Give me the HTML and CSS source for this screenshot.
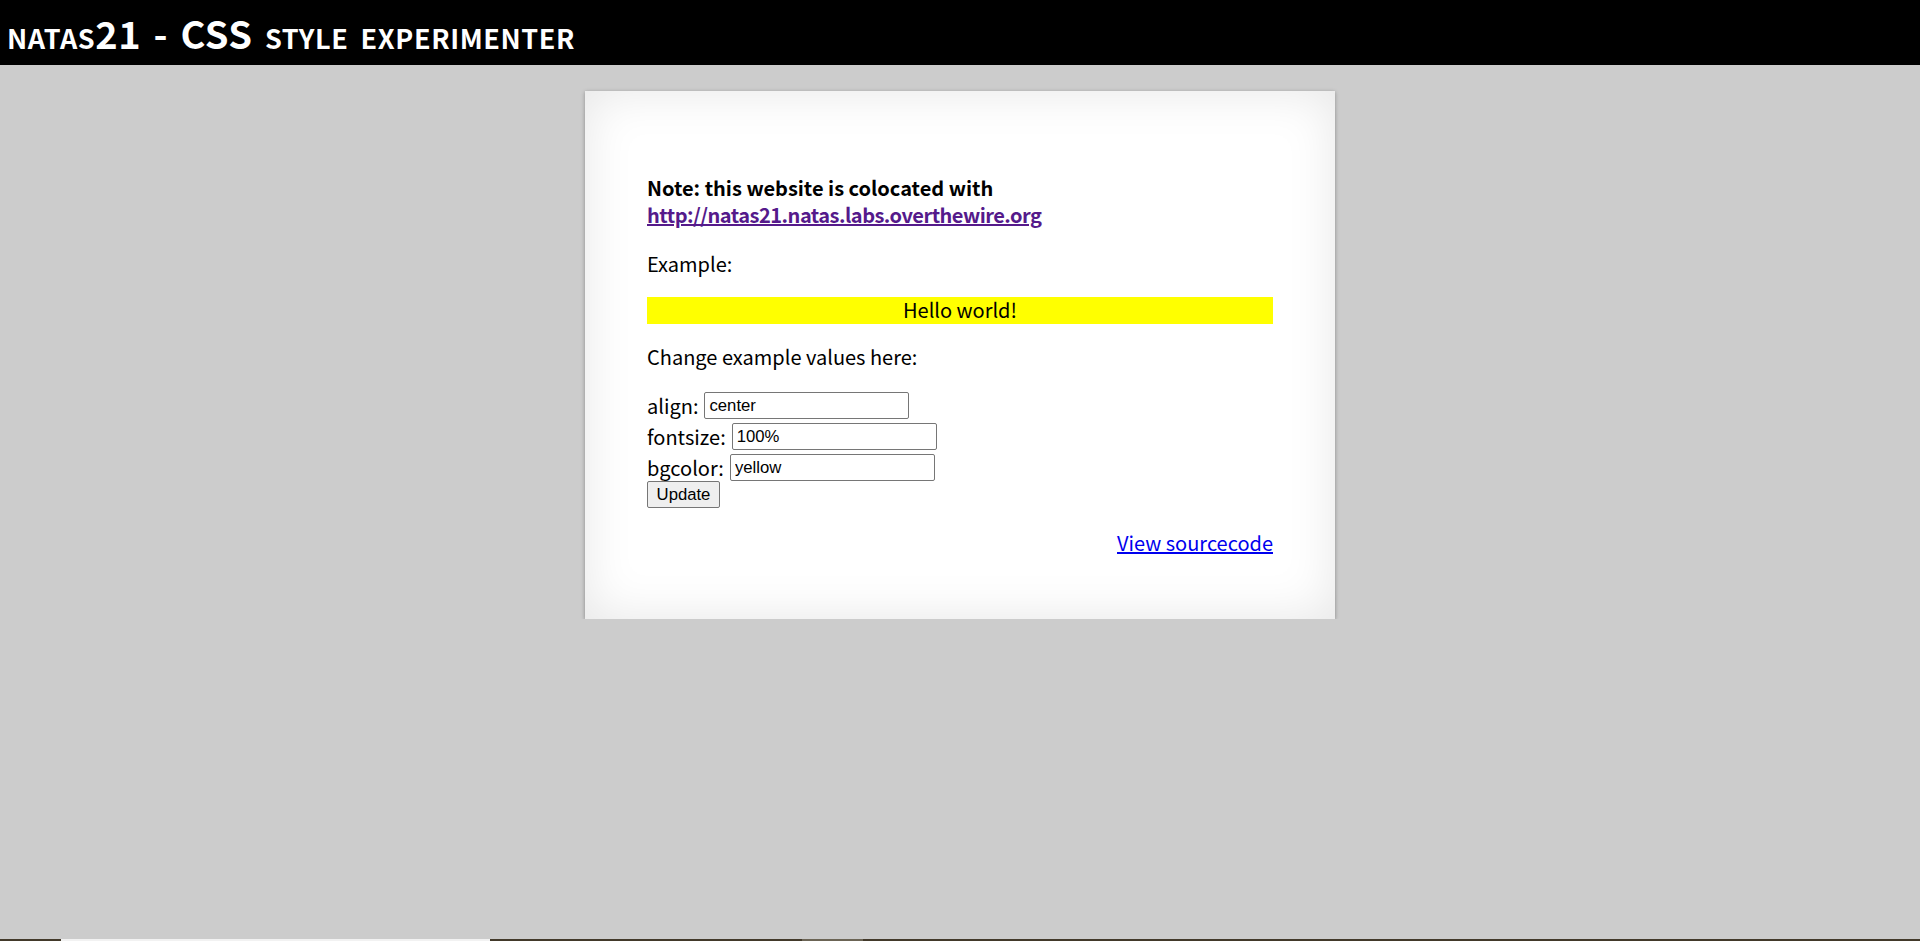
FILE: index.html
```html
<!DOCTYPE html>
<html lang="en">
<head>
    <meta charset="UTF-8">
    <title>natas21</title>
    <link rel="stylesheet" href="styles.css">
</head>
<body>
    <h1 class="title">natas21 - CSS style experimenter</h1>
    <div class="content-wrap">
        <div class="lift lift-left"></div>
        <div class="lift lift-right"></div>
        <div id="content">
            <p class="note">
                <b>Note: this website is colocated with <a class="colo-link" href="#">http://natas21.natas.labs.overthewire.org</a></b>
            </p>
            <p>Example:</p>
            <div class="example">Hello world!</div>
            <p>Change example values here:</p>
            <form class="style-form" action="">
                <div class="row">align: <input class="field" name="align" value="center"></div>
                <div class="row">fontsize: <input class="field" name="fontsize" value="100%"></div>
                <div class="row">bgcolor: <input class="field" name="bgcolor" value="yellow"></div>
                <input class="update" type="submit" value="Update">
            </form>
            <div class="viewsource"><a href="#">View sourcecode</a></div>
        </div>
    </div>

    <div class="bottom-strip">
        <span class="strip-light"></span>
        <span class="strip-grey"></span>
    </div>
</body>
</html>
```

FILE: styles.css
```css
body {
    margin: 0;
    padding: 0;
    background: #ccc;
    font-family: "Noto Sans CJK KR", "Noto Sans", sans-serif;
    font-size: 20px;
    line-height: 26.6px;
    color: #000;
}

.title {
    margin: 0;
    height: 65px;
    padding: 0 0 0 7px;
    background: #000;
    color: #fff;
    font-size: 38px;
    font-weight: 700;
    font-variant: small-caps;
    line-height: 66px;
    letter-spacing: 0.6px;
    word-spacing: 3px;
}

.content-wrap {
    position: relative;
    width: 750px;
    margin: 26px auto 0;
}

/* lifted corner shadows under the card */
.lift {
    position: absolute;
    bottom: -5px;
    width: 50%;
    max-width: 375px;
    height: 40px;
    background: rgba(0, 0, 0, 0.5);
    filter: blur(5px);
}

.lift-left {
    left: 10px;
    transform: rotate(-3deg);
}

.lift-right {
    right: 10px;
    transform: rotate(3deg);
}

#content {
    position: relative;
    box-sizing: border-box;
    padding: 62px;
    background: #fff;
    box-shadow: 0 1px 4px rgba(0, 0, 0, 0.3),
        0 12px 10px -8px rgba(0, 0, 0, 0.3),
        inset 0 0 50px rgba(0, 0, 0, 0.1);
}

p {
    margin: 20px 0;
}

.note {
    margin: 22px 0 22.5px;
}

.colo-link {
    color: #551a8b;
    letter-spacing: -0.5px;
}

.example {
    background: yellow;
    text-align: center;
    height: 26.6px;
}

.style-form {
    margin: 0 0 22px;
}

.row {
    display: flex;
    align-items: center;
    gap: 6px;
    height: 31px;
}

.field {
    width: 205px;
    height: 27px;
    box-sizing: border-box;
    padding: 1px 4px;
    border: 1px solid #767676;
    border-radius: 2px;
    font-family: "Liberation Sans", Arial, sans-serif;
    font-size: 16.7px;
    color: #000;
}

.update {
    display: block;
    margin-top: -2px;
    width: 73px;
    height: 27px;
    padding: 0;
    border: 1px solid #767676;
    border-radius: 2px;
    background: #efefef;
    font-family: "Liberation Sans", Arial, sans-serif;
    font-size: 16.7px;
    color: #000;
}

.viewsource {
    text-align: right;
}

.viewsource a {
    color: #0000ee;
}

.bottom-strip {
    position: fixed;
    left: 0;
    right: 0;
    bottom: 0;
    height: 2px;
    background: #42392a;
}

.strip-light {
    position: absolute;
    left: 61px;
    width: 429px;
    height: 2px;
    background: #f2f2f2;
}

.strip-grey {
    position: absolute;
    left: 802px;
    width: 61px;
    height: 2px;
    background: #6b6455;
}
```
